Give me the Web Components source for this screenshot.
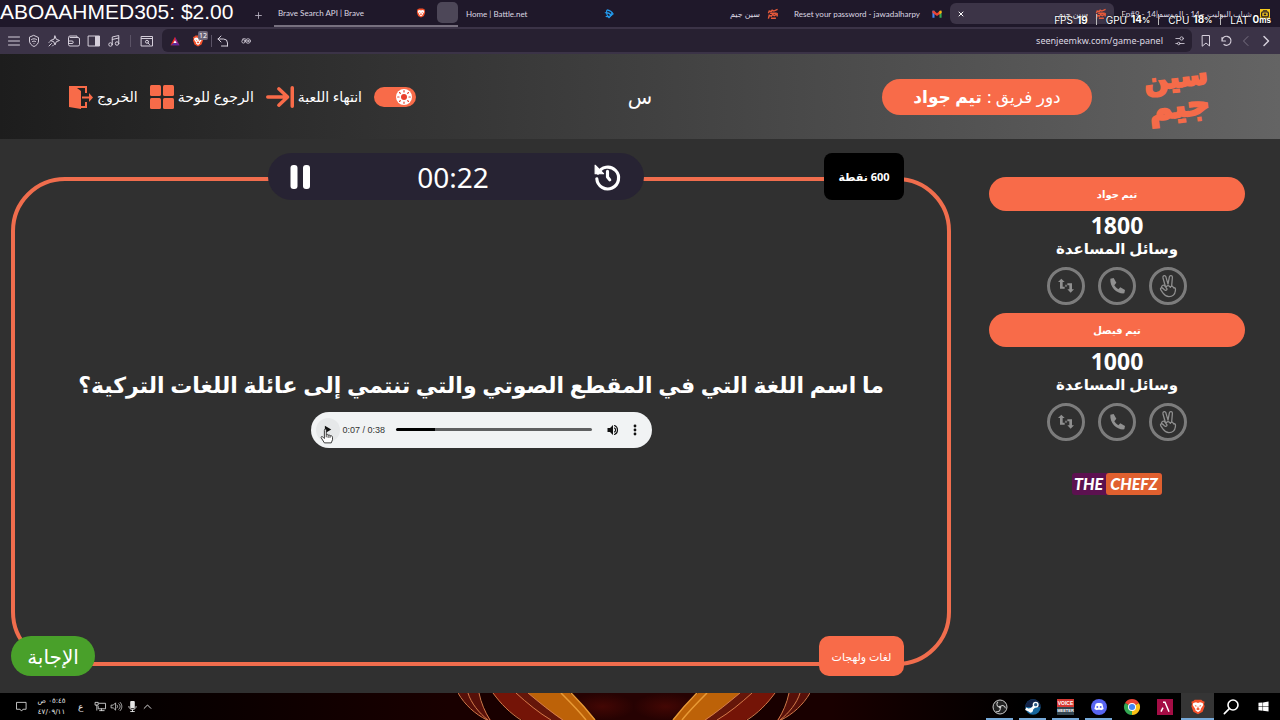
<!DOCTYPE html>
<html lang="ar">
<head>
<meta charset="utf-8">
<title>سين جيم</title>
<style>
html,body{margin:0;background:#303030}
body{font-family:"Noto Sans","DejaVu Sans",sans-serif;color:#fff}
</style>
</head>
<body>
<game-desktop></game-desktop>
<script>
const define = (name, css, html) => {
  const tpl = document.createElement('template');
  customElements.define(name, class extends HTMLElement {
    connectedCallback() {
      if (this.shadowRoot) return;
      tpl.innerHTML = `<style>*{box-sizing:border-box}button{font:inherit;color:inherit;border:0;background:none;padding:0;margin:0;cursor:pointer}a{color:inherit;text-decoration:none}${css}</style>` +
        (typeof html === 'function' ? html(this) : html);
      this.attachShadow({mode: 'open'}).append(tpl.content.cloneNode(true));
    }
  });
};

/* Icons, all on a 24 unit grid */
const line = (d, w = 2) => `<g fill="none" stroke="currentColor" stroke-width="${w}" stroke-linecap="round" stroke-linejoin="round">${d}</g>`;
const ICONS = {
  plus: line('<path d="M12 2v20M2 12h20"/>', 3),
  close: line('<path d="M4 4l16 16M20 4L4 20"/>', 4),
  menu: line('<path d="M1 4h22M1 12h22M1 20h22"/>'),
  shield: line('<path d="M12 1l9 4v7c0 5-4 9-9 11-5-2-9-6-9-11V5z"/><path d="M7 9c3-2 7-2 10 0M9 13c2-1 4-1 6 0M12 17v0"/>'),
  leo: line('<path d="M14 2l2.500 6.500L23 11l-6.500 2.500L14 20l-2.500-6.500L5 11l6.500-2.500zM2 22l5-5M2 15l2-2M9 22l2-2"/>'),
  wallet: line('<path d="M4 5h16a3 3 0 0 1 3 3v11a3 3 0 0 1-3 3H4a3 3 0 0 1-3-3V5a3 3 0 0 1 3-3h14v3M1 12h7a2 2 0 0 1 0 5H1"/>'),
  sidebar: line('<path d="M1 2h22v20H1z"/>') + '<path d="M14 2h9v20h-9z" fill="currentColor"/>',
  music: line('<circle cx="5" cy="19" r="3.500"/><circle cx="18" cy="17" r="3.500"/><path d="M8.500 19V4l13-3v16M8.500 9l13-3"/>'),
  search: line('<path d="M1 3h22v19H1zM1 7h22"/><circle cx="12" cy="13.500" r="3"/><path d="M14 16l3 3"/>'),
  bat: '<path d="M12 2L1 22h11z" fill="#e62b20"/><path d="M12 2l11 20H12z" fill="#9b2189"/><path d="M1 22h22l-11-7z" fill="#5b2ba0"/><path d="M12 10l-4 7h8z" fill="#fff"/>',
  brave: '<path d="M7 1h10l2 2 3 1-1 4 1 3-3 8-7 4-7-4-3-8 1-3-1-4 3-1z" fill="#f4502a"/><path d="M5 6l4-1 3 1 3-1 4 1 1 3-4 6 0 2-4 3-4-3v-2L4 9z" fill="#fff"/><path d="M7 9l3 1-1 2zM17 9l-3 1 1 2zM12 10l1 4 2 1-3 2-3-2 2-1z" fill="#f4502a"/>',
  back: line('<path d="M8 2L2 8l6 6M2 8h11a8 8 0 0 1 8 8v6M21 22H9"/>'),
  goggles: line('<circle cx="6" cy="13" r="4"/><circle cx="17" cy="12" r="5.500"/><circle cx="17" cy="12" r="1.500"/><path d="M10 11l2 0M3 8c3-3 7-2 9 0"/>'),
  tune: line('<path d="M2 6h9M2 18h4M13 18h9"/><circle cx="16" cy="6" r="4"/><circle cx="9" cy="18" r="3"/>'),
  bookmark: line('<path d="M5 1h14v21l-7-6-7 6z"/>'),
  reload: line('<path d="M4 5v7h7M4 12a9 9 0 1 1 4 7"/>', 2.4),
  prev: line('<path d="M16 3l-9 9 9 9"/>'),
  next: line('<path d="M8 3l9 9-9 9"/>', 3),
  battle: '<g fill="none" stroke="#239cf0" stroke-width="2.800" stroke-linejoin="round"><path d="M7 2c5 1 12 5 15 10-4 5-11 7-18 6"/><path d="M7 2c-2 7 0 14 5 19 3-2 6-6 7-11M2 9c5-1 12 1 16 7"/></g>',
  gmail: '<path d="M1 4h5v17H1z" fill="#4285f4"/><path d="M18 4h5v17h-5z" fill="#34a853"/><path d="M1 4h4l7 6 7-6h4v5l-11 8L1 9z" fill="#ea4335"/><path d="M18 5l4-1 1 5-5 4z" fill="#fbbc04"/>',
  seen: '<g fill="none" stroke="#e85a3a" stroke-width="3.400"><path d="M1 10L3 5l5 1 2-3 4 2 9-4M1 23l2-8 5 2 3-4 4 3 7-4v6"/><path d="M5 10h16M7 22h12"/></g>',
  radio: '<path d="M0 0h24v24H0z" fill="#f4c91d"/><rect x="4" y="7" width="16" height="12" rx="3" fill="none" stroke="#241b2b" stroke-width="3"/><path d="M9 11h6v4H9zM7 3h10v2H7z" fill="#241b2b"/>',
  exit: '<path d="M0 1h18v7h-2V3H8l4 3v15h4v-4h2v6h-6v1L0 22z" fill="currentColor"/><path d="M13 11.500h7V8l4 4.500-4 4.500v-3.500h-7z" fill="currentColor"/>',
  grid: '<g fill="currentColor"><rect x="0" y="0" width="11" height="11" rx="1.500"/><rect x="13" y="0" width="11" height="11" rx="1.500"/><rect x="0" y="13" width="11" height="11" rx="1.500"/><rect x="13" y="13" width="11" height="11" rx="1.500"/></g>',
  finish: '<g fill="none" stroke="currentColor" stroke-width="3" stroke-linecap="round" stroke-linejoin="round"><path d="M1.500 12H18M11 5l7.500 7-7.500 7M22.500 4v16"/></g>',
  sun: '<circle cx="12" cy="12" r="4.500" fill="#e9402d"/><g stroke="#e9402d" stroke-width="1.800" stroke-linecap="round"><path d="M12 2.500v2M12 19.500v2M2.500 12h2M19.500 12h2M5.300 5.300l1.200 1.200M17.500 17.500l1.200 1.200M5.300 18.700l1.200-1.200M17.500 6.500l1.200-1.200"/></g>',
  pause: '<rect x="2.500" y="0" width="7" height="24" rx="3" fill="currentColor"/><rect x="15" y="0" width="7" height="24" rx="3" fill="currentColor"/>',
  history: line('<path d="M3.500 9A9.700 9.700 0 1 1 2.500 14"/><path d="M12 7.500v5l2 2.500"/>', 2.8) + '<path d="M1 2v7.500h7.500z" fill="currentColor" stroke="currentColor" stroke-linejoin="round"/>',
  swap: '<path d="M5 1l5 5H7v7h3v3H3V6H0zM19 22l-5-5h3v-6h-3V8h7v9h3zM11 10h2v3h-2z" fill="currentColor"/>',
  phone: '<path d="M2 1l5-1 4 7-3 4c2 3 3 4 6 6l3-3 7 4-1 5C12 24 1 14 2 1z" fill="currentColor"/>',
  peace: line('<path d="M9 12L6.500 3c-.5-2.500 2.500-3 3.200-1L12 10l1.500-8c.5-2 3.500-1.500 3.300.5L16 12"/><path d="M5 13c.5-2.500 3-2.500 4-.5l2 3c-.5 2-3 1.500-4-.5M10 13c2-2.500 4-1 4.500.5 1-2 3-1.500 3.500.5 2-.5 2.500 1 2 3.500-.5 4-3 6-7 6-4.500 0-5.500-2.500-7-4.500l-2-3c-.8-2 1-3 3-1"/>', 1.4),
  play: '<path d="M5 2v20l17-10z" fill="currentColor"/>',
  volume: '<path d="M1 8h5l6-6v20l-6-6H1z" fill="currentColor"/>' + line('<path d="M15 8c3 2 3 6 0 8M15 3c8 3 8 15 0 18"/>', 2.2),
  dots: '<g fill="currentColor"><circle cx="12" cy="4" r="2.800"/><circle cx="12" cy="12" r="2.800"/><circle cx="12" cy="20" r="2.800"/></g>',
  hand: '<path d="M7 23l-5-8c-1-2 1-3 3-1l2 2V3c0-3 3-3 3 0v7c1-1 3-1 3 1 1-1 3-1 3 1 2-1 4 0 4 2v4l-2 5z" fill="#fff" stroke="#222" stroke-width="1.400" stroke-linejoin="round"/><path d="M10 10v4M13 11v4M16 12v3" stroke="#222" stroke-width="1.300"/>',
  notice: line('<path d="M2 3h20v15h-7l-3 4-3-4H2z"/>', 1.8),
  net: line('<path d="M9 5h14v12H7v-5M10 21h10M14 17v4M1 3h6v6H1zM4 9v11"/>', 1.8),
  sound: line('<path d="M1 9h4l5-5v16l-5-5H1zM13 9c2 2 2 4 0 6M17 6c4 4 4 8 0 12M20 3c5 5 5 13 0 18"/>', 1.6),
  mic: '<rect x="7" y="0" width="10" height="16" rx="2" fill="currentColor"/>' + line('<path d="M4 12c0 9 16 9 16 0M12 19v4M8 23h8"/>'),
  up: line('<path d="M3 17l9-9 9 9"/>', 2.5),
  obs: '<circle cx="12" cy="12" r="10.500" fill="#222" stroke="#ccc" stroke-width="1.500"/><g fill="none" stroke="#ccc" stroke-width="1.600"><path d="M12 12c-5 0-6-5-3-8M12 12c3-4 8-2 8 2M12 12c2 5-2 8-6 7"/></g><circle cx="12" cy="12" r="2" fill="#ccc"/>',
  steam: '<circle cx="12" cy="12" r="11.500" fill="#16659b"/><path d="M.5 12a11.500 11.500 0 0 1 23 0z" fill="#13244a"/><path d="M1 14.500l7 3L16 9" stroke="#fff" stroke-width="4" fill="none"/><circle cx="16" cy="8.500" r="4.500" fill="#fff"/><circle cx="16" cy="8.500" r="2.500" fill="#2a5a86"/><circle cx="8.500" cy="17" r="3.500" fill="#fff"/>',
  discord: '<circle cx="12" cy="12" r="12" fill="#5865f2"/><path d="M7 7l3-1h4l3 1 2 8-4 2-1-1h-4l-1 1-4-2z" fill="#fff"/><circle cx="9.500" cy="12" r="1.500" fill="#5865f2"/><circle cx="14.500" cy="12" r="1.500" fill="#5865f2"/>',
  chrome: '<path d="M12 12L1.600 6A12 12 0 0 1 22.400 6z" fill="#ea4335"/><path d="M12 12L22.400 6A12 12 0 0 1 12 24z" fill="#fbc116"/><path d="M12 12v12A12 12 0 0 1 1.600 6z" fill="#34a853"/><circle cx="12" cy="12" r="6" fill="#fff"/><circle cx="12" cy="12" r="4.600" fill="#4285f4"/>',
  app: '<path d="M0 0h24v24H0z" fill="#a40d45"/><path d="M6 19l3-6M9 5h3l6 14" stroke="#fff" stroke-width="2.200" fill="none"/>',
  find: line('<circle cx="15" cy="9" r="7.500"/><path d="M9.500 14.500L2 22"/>', 2.4),
  windows: '<path d="M1 4l9-1v8H1zM11 3l12-2v10H11zM1 12h9v9l-9-1zM11 12h12v11l-12-2z" fill="#fff"/>'
};
define('ui-icon', ':host{display:inline-block;flex:none;width:12px;height:12px}svg{display:block;width:100%;height:100%;overflow:visible}',
  el => `<svg viewBox="0 0 24 24" aria-hidden="true">${ICONS[el.getAttribute('name')]}</svg>`);

/* Browser chrome */
define('browser-tab', `
:host{display:flex;flex:1 1 0;min-width:0;height:21px;align-self:center;font:8px/12px Lato,"DejaVu Sans",sans-serif;color:#dcd7e2}
button{display:flex;align-items:center;gap:8px;width:100%;min-width:0;padding:0 8px;border-radius:6px;text-align:left}
span{flex:1;min-width:0;white-space:nowrap;overflow:hidden}
:host([first]) button{padding-left:4px;padding-right:11px}
:host([rtl]) span{direction:rtl;text-align:right}
:host([active]) button{background:#3c3447;color:#fff}
ui-icon{width:10px;height:10px}ui-icon[name=close]{width:6px;height:6px}`,
  el => `<button role="tab">${el.hasAttribute('active') ? '<ui-icon name="close"></ui-icon>' : ''}<span><slot></slot></span><ui-icon name="${el.getAttribute('icon')}"></ui-icon></button>`);

define('browser-tabs', `
:host{display:flex;position:relative;height:27px;background:#1f182a;padding:0 2px 0 246px}
.new{width:24px;margin-right:4px;color:#b8b1c0}.new ui-icon{width:7px;height:7px;vertical-align:middle}
.group{display:flex;flex:1 1 21px;max-width:184px;border-bottom:2px solid #77707f}
.chip{width:21px;height:21px;border-radius:5px;background:#4d4758;align-self:center}
.donate{position:absolute;left:0;top:0;font:21px/24px "Liberation Sans",sans-serif;color:#fff;white-space:nowrap}
.stats{position:absolute;right:9px;top:11px;display:flex;gap:8px;font:10px/16px Inter,sans-serif;text-shadow:0 0 2px #000;white-space:nowrap}
.stats span{display:flex;gap:4px;align-items:center}
.stats span+span::before{content:"";width:1px;height:11px;background:#bbb;margin-right:5px}.stats b{font-size:10px}.stats small{font-size:8px;font-weight:700}`,
  `<button class="new" aria-label="New tab"><ui-icon name="plus"></ui-icon></button>
<div class="group"><browser-tab first icon="brave">Brave Search API | Brave</browser-tab><div class="chip"></div></div>
<browser-tab icon="battle">Home | Battle.net</browser-tab>
<browser-tab rtl icon="seen">سين جيم</browser-tab>
<browser-tab icon="gmail">Reset your password - jawadalharpy</browser-tab>
<browser-tab rtl active icon="seen">سين جيم</browser-tab>
<browser-tab rtl icon="radio">شباب البوليت ج14 - الموسم|14 - Ep#9</browser-tab>
<div class="donate">ABOAAHMED305: $2.00</div>
<div class="stats"><span>FPS <b>19</b></span><span>GPU <b>14<small>%</small></b></span><span>CPU <b>18<small>%</small></b></span><span>LAT <b>0<small>ms</small></b></span></div>`);

define('browser-toolbar', `
:host{display:flex;align-items:center;height:27px;background:#3b3347;color:#d5cfdb;padding:0 8px;gap:8px}
.tools{display:flex;align-items:center;gap:8px}button{display:flex;position:relative}
i{width:1px;height:12px;background:#5b5366}
.tools i{margin:0 2px}
.bar{flex:1;display:flex;align-items:center;gap:12px;height:23px;margin-left:1px;padding:0 7px 0 8px;border-radius:6px;background:#272031}
.bar i{margin-left:-5px;margin-right:-7px}
.bar small{position:absolute;left:6px;top:-4px;padding:0 1px;border-radius:2px;background:#6b6477;color:#fff;font:7px/9px "Noto Sans",sans-serif}
input{flex:1;min-width:0;border:0;background:none;color:#ddd8e2;font:9px/20px "Noto Sans",sans-serif;text-align:right;padding:0;outline:0}
.nav{display:flex;gap:8px}.dim{opacity:.4}
.bar ui-icon[name=tune],.bar ui-icon[name=bat],.bar ui-icon[name=goggles]{width:10px;height:10px}`,
  `<div class="tools">${['menu', 'shield', 'leo', 'wallet', 'sidebar', 'music'].map(n => `<button aria-label="${n}"><ui-icon name="${n}"></ui-icon></button>`).join('')}<i></i><button aria-label="search"><ui-icon name="search"></ui-icon></button></div>
<div class="bar"><button aria-label="rewards"><ui-icon name="bat"></ui-icon></button><button aria-label="Shields"><ui-icon name="brave"></ui-icon><small>12</small></button><i></i><button aria-label="redirect"><ui-icon name="back"></ui-icon></button><button aria-label="goggles"><ui-icon name="goggles"></ui-icon></button>
<input aria-label="Address" value="seenjeemkw.com/game-panel"><button aria-label="site settings"><ui-icon name="tune"></ui-icon></button></div>
<div class="nav">${['bookmark', 'reload', 'prev', 'next'].map(n => `<button aria-label="${n}" class="${n === 'prev' ? 'dim' : ''}"><ui-icon name="${n}"></ui-icon></button>`).join('')}</div>`);

/* Game header */
define('seen-logo', `
:host{display:block;width:66px;height:66px;color:#f56b49}
a{display:flex;flex-direction:column;align-items:center;height:100%;font:bold 28px/28px "DejaVu Sans",sans-serif;transform:rotate(-7deg);-webkit-text-stroke:2px #f56b49}
.big{font-size:32px}`,
  '<a href="#"><span>سين</span><span class="big">جيم</span></a>');

define('game-header', `
:host{display:grid;grid-template-columns:1fr auto 1fr;align-items:center;direction:rtl;height:85px;padding:0 69px;background:linear-gradient(90deg,#1d1d1d,#404040 50%,#646464)}
.team{display:flex;align-items:center;gap:53px}
.turn{display:flex;align-items:center;justify-content:center;gap:5px;width:210px;height:36px;border-radius:18px;background:#f86b49;font-size:17px;white-space:nowrap}
.title{font-size:20px}
nav{display:flex;align-items:center;justify-content:flex-end;gap:12px;font-size:14px;white-space:nowrap}
nav a{display:flex;align-items:center;gap:4px}ui-icon{color:#f86b49;width:24px;height:24px}
ui-icon[name=finish]{width:28px;height:28px}
label{display:flex;position:relative}
input{appearance:none;margin:0;width:42px;height:20px;border-radius:10px;background:#f86b49}
label span{position:absolute;right:4px;top:2px;width:16px;height:16px;border-radius:8px;background:#fff;display:flex}
label ui-icon{width:16px;height:16px}`,
  `<div class="team"><seen-logo></seen-logo><div class="turn"><span>دور فريق :</span><b>تيم جواد</b></div></div>
<div class="title">س</div>
<nav><label><input type="checkbox" role="switch" checked aria-label="المظهر"><span><ui-icon name="sun"></ui-icon></span></label>
<a href="#"><span>انتهاء اللعبة</span><ui-icon name="finish"></ui-icon></a><a href="#"><span>الرجوع للوحة</span><ui-icon name="grid"></ui-icon></a><a href="#"><span>الخروج</span><ui-icon name="exit"></ui-icon></a></nav>`);

/* Question panel */
define('audio-player', `
:host{display:flex;position:relative;align-items:center;width:341px;height:36px;border-radius:18px;background:#f1f3f4;color:#111;direction:ltr;padding:0 6px 0 5px}
button{display:flex;align-items:center;justify-content:center;width:22px;height:24px}
.play{border-radius:12px;width:24px;background:#e6e8e9}.play ui-icon{width:9px;height:9px}
time{font:9px/16px "Liberation Sans",sans-serif;margin:0 11px 0 3px;color:#333;white-space:nowrap}
input{flex:1;min-width:0;appearance:none;margin:0 10px 0 0;height:3px;border-radius:2px;background:linear-gradient(90deg,#000 20%,#5f6061 20%)}
input::-webkit-slider-thumb{appearance:none;width:1px;height:3px;background:none}
.hand{position:absolute;left:9px;top:16px;width:15px;height:16px}`,
  `<button class="play" aria-label="تشغيل"><ui-icon name="play"></ui-icon></button><time>0:07 / 0:38</time><input type="range" min="0" max="38" value="7" aria-label="موضع التشغيل"><button aria-label="الصوت"><ui-icon name="volume"></ui-icon></button><button aria-label="المزيد"><ui-icon name="dots"></ui-icon></button><ui-icon class="hand" name="hand"></ui-icon>`);

define('round-timer', `
:host{display:flex;align-items:center;justify-content:space-between;direction:ltr;height:47px;border-radius:24px;background:#272333;padding:0 23px 0 20px;font-size:28px;line-height:40px}
button{display:flex}ui-icon{width:24px;height:24px}ui-icon[name=history]{width:27px;height:27px}`,
  '<button aria-label="إيقاف"><ui-icon name="pause"></ui-icon></button><span>00:22</span><button aria-label="إعادة"><ui-icon name="history"></ui-icon></button>');

define('question-panel', `
:host{display:flex;flex-direction:column;align-items:center;justify-content:center;position:relative;border:4px solid #f06d4d;border-radius:54px;direction:rtl;min-height:420px}
h1{margin:0;font-size:22px;line-height:40px;text-align:center}
audio-player{margin-top:8px;margin-bottom:32px}
round-timer{position:absolute;top:-28px;right:303px;width:376px}
.points{position:absolute;top:-28px;right:43px;width:80px;height:47px;border-radius:8px;background:#000;font-weight:700;font-size:11px;display:flex;align-items:center;justify-content:center}
.topic{position:absolute;bottom:-14px;right:43px;width:85px;height:40px;border-radius:10px;background:#f86b49;font-size:11px;display:flex;align-items:center;justify-content:center}
.answer{position:absolute;bottom:-14px;left:-4px;width:84px;height:40px;border-radius:20px;background:#49a02a;font-size:20px}`,
  `<round-timer></round-timer><div class="points">600 نقطة</div>
<h1>ما اسم اللغة التي في المقطع الصوتي والتي تنتمي إلى عائلة اللغات التركية؟</h1><audio-player></audio-player>
<div class="topic">لغات ولهجات</div><button class="answer">الإجابة</button>`);

/* Sidebar */
define('team-card', `
:host{display:flex;flex-direction:column;align-items:center;direction:rtl;height:136px}
h2{margin:0;width:100%;height:34px;border-radius:17px;background:#f86b49;font-size:10px;line-height:34px;text-align:center}
strong{font-size:23px;line-height:28px}h3{margin:0;font-size:15px;line-height:18px}
div{display:flex;gap:13px;margin-top:10px}
button{display:flex;align-items:center;justify-content:center;width:38px;height:38px;border:3px solid #7c7c7c;border-radius:19px;color:#909090}
ui-icon{width:16px;height:16px}ui-icon[name=peace]{width:22px;height:22px}`,
  el => `<h2>${el.getAttribute('team')}</h2><strong>${el.getAttribute('score')}</strong><h3>وسائل المساعدة</h3>
<div><button aria-label="إجابتان"><ui-icon name="peace"></ui-icon></button><button aria-label="اتصال"><ui-icon name="phone"></ui-icon></button><button aria-label="تبديل"><ui-icon name="swap"></ui-icon></button></div>`);

define('chefz-logo', `
:host{display:flex;width:90px;height:22px;border-radius:3px;background:#5c1150;font:italic 900 16px/22px Lato,sans-serif}
span{flex:1;padding-left:2px}b{width:56px;border-radius:3px;background:#e0602f;text-align:center;font-weight:900}`,
  '<span>THE</span><b>CHEFZ</b>');

/* Desktop taskbar */
define('task-bar', `
:host{display:flex;position:relative;height:27px;background:linear-gradient(90deg,#000 5%,#190000 35%,#190000 65%,#000 80%);overflow:hidden;align-items:center;justify-content:space-between}
.art{position:absolute;left:50%;margin-left:-182px;width:352px;height:27px}
.tray{display:flex;align-items:center;gap:5px;padding-left:16px;color:#e6e6e6}
.clock{direction:rtl;width:29px;margin:0 7px 0 5px;font:7px/11px "DejaVu Sans",sans-serif;text-align:center;white-space:nowrap}
.lang{font-size:9px;margin-right:7px}.tray ui-icon{width:11px;height:11px}.tray ui-icon[name=up]{width:9px;height:9px}
.apps{display:flex;height:100%}
.apps button{display:flex;align-items:center;justify-content:center;width:33px;position:relative}
.apps ui-icon{width:16px;height:16px}.apps .on::after{content:"";position:absolute;left:3px;right:3px;bottom:0;height:2px;background:#76a9d8}
.apps .active{background:#353535}.apps .active::after{left:0;right:0}
.apps ui-icon[name=windows]{width:11px;height:11px}
.vm{width:17px;font:bold 5px/8px "Liberation Sans",sans-serif;color:#fff;background:linear-gradient(#d83a34 50%,#34454f 50%);text-align:center}.vm small{display:block;font-size:4px;line-height:8px}`,
  `<svg class="art" viewBox="0 0 352 27" aria-hidden="true"><defs><radialGradient id="g"><stop stop-color="#430704"/><stop offset="1" stop-color="#260202"/></radialGradient>
<g id="w"><path d="M112 0h65v27h-38z" fill="url(#g)"/><path d="M0 0h21c1 9 5 18 12 27h-4C17 21 8 12 0 0z" fill="#571009"/><path d="M35 0h32c13 10 23 18 34 27H64C52 20 43 11 35 0z" fill="#741407"/><path d="M66 0h46c9 9 18 18 25 27H97C85 19 76 9 66 0z" fill="#bd6208"/><path d="M58 0h12c13 11 23 19 34 27H93C81 19 70 10 58 0z" fill="#65160a"/><g fill="none" stroke="#d37b4b"><path d="M0 0c7 12 17 21 29 27M10 0c3 10 11 20 20 27M21 0c2 10 6 19 11 27M35 0c8 11 17 20 28 27M58 0c11 10 23 20 35 27M70 0c12 10 23 19 35 27" /><path d="M103 0c9 9 18 18 25 27M113 0c9 9 17 18 24 27" stroke="#e99a35" stroke-width="1.500"/></g></g></defs><use href="#w"/><use href="#w" transform="translate(352 0) scale(-1 1)"/></svg>
<div class="tray"><ui-icon name="notice"></ui-icon><div class="clock">٠٥:٤٥ ص<br>٤٧/٠٩/١١</div><span class="lang">ع</span><ui-icon name="net"></ui-icon><ui-icon name="sound"></ui-icon><ui-icon name="mic"></ui-icon><ui-icon name="up"></ui-icon></div>
<div class="apps"><button class="on" aria-label="OBS"><ui-icon name="obs"></ui-icon></button><button class="on" aria-label="Steam"><ui-icon name="steam"></ui-icon></button><button class="on"><div class="vm">VOICE<small>MEETER</small></div></button><button class="on" aria-label="Discord"><ui-icon name="discord"></ui-icon></button><button aria-label="Chrome"><ui-icon name="chrome"></ui-icon></button><button aria-label="App"><ui-icon name="app"></ui-icon></button><button class="on active" aria-label="Brave"><ui-icon name="brave"></ui-icon></button><button aria-label="Search"><ui-icon name="find"></ui-icon></button><button aria-label="Start"><ui-icon name="windows"></ui-icon></button></div>`);

define('game-desktop', `
:host{display:flex;flex-direction:column;min-height:100vh}
main{flex:1;display:grid;grid-template-columns:minmax(0,1fr) 256px;gap:38px;padding:38px 35px 27px 11px;background:#303030}
aside{display:flex;flex-direction:column}chefz-logo{align-self:center;margin-top:24px}`,
  `<browser-tabs></browser-tabs><browser-toolbar></browser-toolbar><game-header></game-header>
<main><question-panel></question-panel><aside><team-card team="تيم جواد" score="1800"></team-card><team-card team="تيم فيصل" score="1000"></team-card><chefz-logo></chefz-logo></aside></main><task-bar></task-bar>`);
</script>
</body>
</html>
